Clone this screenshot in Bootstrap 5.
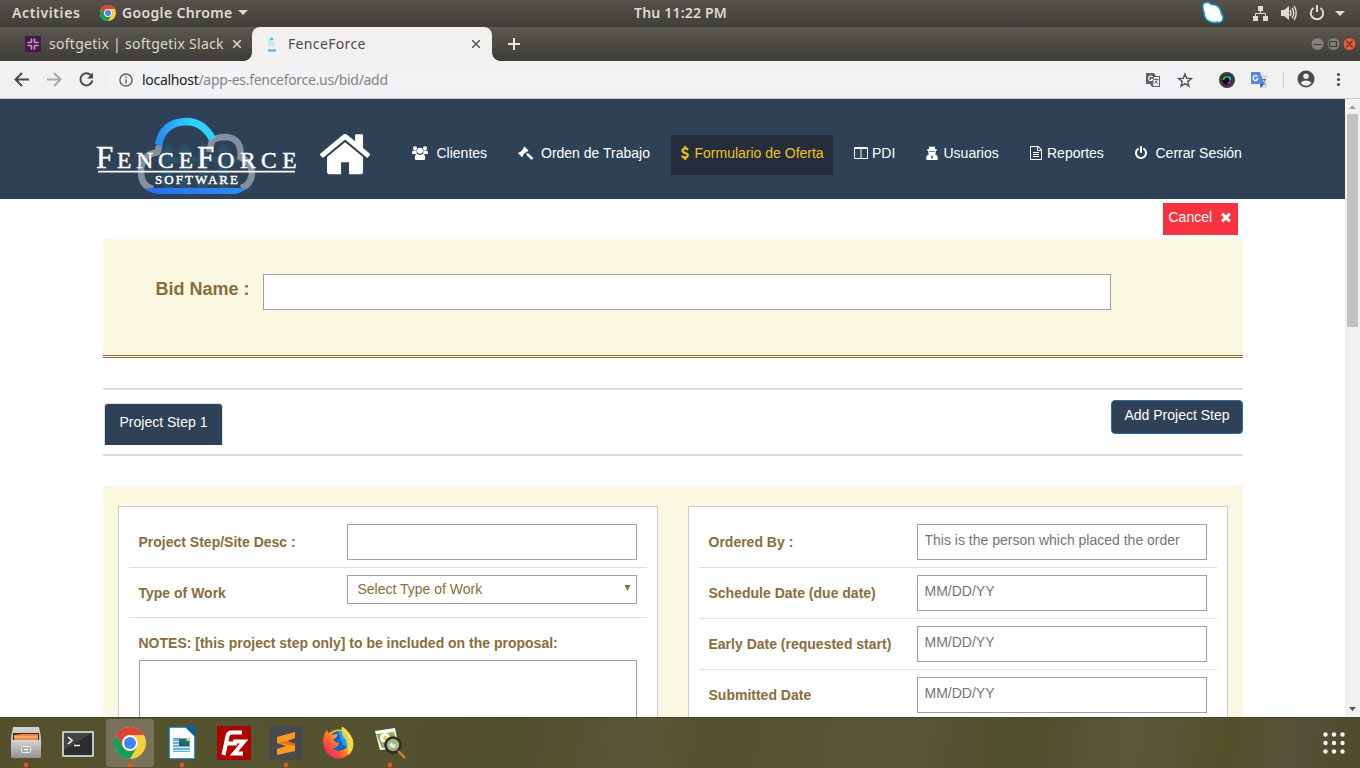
<!DOCTYPE html>
<html lang="es">
<head>
<meta charset="utf-8">
<title>FenceForce</title>
<link href="https://cdn.jsdelivr.net/npm/bootstrap@5.3.0/dist/css/bootstrap.min.css" rel="stylesheet">
<style>
body{width:1360px;height:768px;overflow:hidden;font:14px/20px "Liberation Sans",Arial,sans-serif;color:#333;background:#fff}
svg{display:block;flex:none}
.ui{font-family:"Noto Sans","Open Sans",sans-serif;white-space:nowrap}
.sysbar{height:27px;background:linear-gradient(#56524a,#413f3a);color:#dfdbd2;font-weight:600;font-size:14px;padding:0 0 1px 12px}
.sysbar .clock{margin-left:386px;width:94px}
.tabbar{height:34px;background:linear-gradient(#5a594f,#3e3c38);color:#dcd9d0;font-size:14px}
.tab-idle{width:252px;padding-left:25px}
.tab-live{width:240px;background:#f2f1f0;border-radius:8px 8px 0 0;color:#4a4a4c;padding-left:14px;position:relative}
.tab-live:before,.tab-live:after{content:"";position:absolute;bottom:0;width:8px;height:8px}
.tab-live:before{left:-8px;background:radial-gradient(circle at 0 0,transparent 7.5px,#f2f1f0 8px)}
.tab-live:after{right:-8px;background:radial-gradient(circle at 100% 0,transparent 7.5px,#f2f1f0 8px)}
.urlbar{height:38px;background:#f2f1f0;border-bottom:1px solid #c9c8c7;padding-left:12px}
.omni{width:1094px;height:28px;border-radius:14px;background:#f1f3f4;margin-left:12px;padding-left:11px;font-size:14px;color:#80868b}
.omni b{font-weight:400;color:#202124}
.view{height:618px;overflow:hidden}
.site{width:1345px}
.site-head{height:100px;background:#2f4156}
.logo{margin:11px 0 0 95px}
.home{margin:33px 0 0 22px}
.menu{display:grid;grid-template-columns:106px 153px 183px 72px 104px 104px 120px;margin:36px 0 0 42px;height:40px;color:#fff}
.menu>div{display:flex;height:36px;align-items:center;white-space:nowrap}
.menu svg{fill:#fff}
.menu .current{background:#232d3b;color:#f4c020;height:40px;width:162px;padding:0 0 4px 10px}
.menu .current svg{fill:#f4c020}
.wrap{width:1140px;margin-left:103px}
.cancel{width:75px;height:32px;background:#f7333f;color:#fff;margin:4px 5px 4px auto;padding:4px 0 0 5.5px}
.cream{background:#fbf8e1}
.bid{height:119px;border-bottom:3px double #8a6d3b;padding:35px 0 0 52.5px;color:#8a6d3b}
.bid label{font-size:18px;font-weight:700;width:107.5px;line-height:30px}
.box{border:1px solid #a0a0a0;background:#fff;height:36px;border-radius:0;display:block;font-size:14px;line-height:20px;padding:0 6.5px 4px;outline:0}
.box::placeholder{color:#757575;opacity:1}
.steps{margin-top:30px;height:68px;border:solid #ddd;border-width:2px 0}
.step-tab{width:119px;height:42px;margin:13px 0 0 1px;background:#2f4156;border:1px solid #ddd;border-bottom:0;border-radius:4px 4px 0 0;color:#fff;padding:8px 14.5px}
.step-add{width:132px;height:34px;margin-top:10px;background:#2f4156;border:1px solid #2e6da4;border-radius:4px;color:#fff;text-align:center;padding-top:4px}
.panels{margin-top:30px;padding:20px 15px;gap:30px;height:260px}
.panel-box{width:540px;height:300px;background:#fff;border:1px solid #ccc;padding:10px;color:#8a6d3b}
.line{height:51px;border-bottom:1px solid #ddd;padding:7px 10px 7px 9.5px}
.line label{width:208.5px;font-weight:700;line-height:36px}
.line .box{width:290px}
.notes{padding:15px 10px 0}
.notes .caption-row{height:27px;margin-left:-.5px}
.notes .box{height:100px;resize:none}
.pick{border:1px solid #a0a0a0;width:290px;height:29px;padding:0 5px 2px 9.5px}
.scroller{width:15px;background:#f1f1f1}
.scroller i{width:11px;height:213px;background:#c1c1c1;margin-top:3px}
.dock{height:51px;background:linear-gradient(100deg,#53502b,#565330 20%,#504f2c 38%,#5c5636 47%,#54522d 52%,#5a5537 66%,#4f4f2a 75%,#5d563b 83%,#545029 90%,#5a5139 94%,#4c4b2b);border-top:1px solid #47462b}
</style>
</head>
<body class="d-flex flex-column">

<div class="sysbar ui d-flex align-items-center">
  <span style="letter-spacing:.6px;width:88px">Activities</span>
  <svg width="16" height="16" viewBox="0 0 48 48"><use href="#chrome"/></svg>
  <span style="letter-spacing:.35px;width:116px;margin-left:6px">Google Chrome</span>
  <svg width="10" height="6"><path d="M0 0h10L5 5z" fill="#dfdbd2"/></svg>
  <span class="clock" style="letter-spacing:.2px">Thu 11:22 PM</span>
  <svg style="margin-left:472px" width="156" height="26" viewBox="1200 0 156 26">
    <path d="M1203 7.500q-1-5 4-5 3 0 4 2 9-.5 10.500 9.500 2.500 3 1 6-1.500 3.500-5.500 2-2 1-6 0-7-2-7-10-1-2-1-4.500z" fill="#fff" stroke="#119fda" stroke-width="1.400"/>
    <g fill="#dfdbd2"><path d="M1258 6h5v5h-5zM1253 16h5v5h-5zM1263 16h5v5h-5zM1281 10h3l5-4v14l-5-4h-3z"/><path d="M1335 11h10l-5 5z"/></g>
    <g fill="none" stroke="#dfdbd2" stroke-width="1"><path d="M1260.500 11v3M1255.500 16v-2.500h10V16"/><path stroke-width="1.400" d="M1290 10q2 3 0 6M1292 8q3.500 5 0 10M1294 6q4.500 7 0 14"/><path stroke-width="2" d="M1313.500 8a6.200 6.200 0 1 0 7 0M1317 5v7"/></g>
  </svg>
</div>

<div class="tabbar d-flex ui">
  <div class="tab-idle d-flex align-items-center">
    <svg width="16" height="16"><path fill="#4a154b" d="M0 0h16v16H0z"/><path d="M6.500 3v3.500H4M9.500 13V9.500H12M3 9.500h3.500V12M13 6.500H9.500V4M3 6.500h1M9.500 3v1M13 9.500h-1M6.500 13v-1" fill="none" stroke="#b59fb5" stroke-width="1.700" stroke-linecap="round" stroke-dasharray="2.800 1"/></svg>
    <span style="width:184px;margin-left:8px;letter-spacing:.28px">softgetix | softgetix Slack</span>
    <svg width="8" height="8"><path d="M0 0l8 8M8 0L0 8" stroke="#dcd9d0" stroke-width="1.500"/></svg>
  </div>
  <div class="tab-live d-flex align-items-center">
    <svg width="12" height="16"><path d="M2 5q1-4 4-4l2 3 1 7H2z" fill="#c9e9f4"/><path d="M3 4l3-3 2 3" fill="#44c6f4"/><path d="M2 13h8v3H2z" fill="#89b9ee"/></svg>
    <span style="width:184px;margin-left:10px;letter-spacing:.35px">FenceForce</span>
    <svg width="8" height="8"><path d="M0 0l8 8M8 0L0 8" stroke="#55575a" stroke-width="1.500"/></svg>
  </div>
  <svg width="868" height="34" viewBox="492 27 868 34">
    <path d="M508 44h12M514 38v12" stroke="#e8e5dc" stroke-width="2"/>
    <g stroke="#3b3a36" stroke-width=".7"><circle cx="1317.500" cy="44" r="6.500" fill="#82807a"/><circle cx="1333.500" cy="44" r="6.500" fill="#82807a"/><circle cx="1349.500" cy="44" r="6.500" fill="#ee5a31"/></g>
    <path d="M1313.500 44.500h8M1329.500 41.500h7v5h-7zM1346.500 41l6 6M1352.500 41l-6 6" fill="none" stroke="#3b3a36" stroke-width="1.200"/>
  </svg>
</div>

<div class="urlbar ui d-flex align-items-center">
  <svg width="84" height="20" viewBox="12 70 84 20" fill="none" stroke-width="2"><path d="M29 79.500H16M22 73l-6.500 6.500L22 86" stroke="#4b4b4b"/><path d="M47 79.500h13M54 73l6.500 6.500L54 86" stroke="#a9a9a8"/><path d="M91 75.500a6 6 0 1 0 1.300 5" stroke="#4b4b4b"/><path d="M93 72.500v6h-6z" fill="#4b4b4b"/></svg>
  <div class="omni d-flex align-items-center">
    <svg width="14" height="14" fill="none" stroke="#5f6368" stroke-width="1.500"><circle cx="7" cy="7" r="6.100"/><path d="M7 6.200V10.500M7 3.500v1.500"/></svg>
    <span style="margin-left:9px;letter-spacing:-.3px"><b>localhost</b>/app-es.fenceforce.us/bid/add</span>
  </div>
  <svg style="margin-left:-62px" width="210" height="28" viewBox="1140 66 210 28">
    <path d="M1146 73h8l2 3h4v11h-8l-2-3h-4z" fill="#5f6368"/><path d="M1154 77h5v9h-6" fill="#f1f3f4"/><path d="M1153.500 79.500h5M1156 78v1.500M1157.500 79.500q-1 3-3 4M1155 81l3 3" stroke="#5f6368" fill="none" stroke-width=".9"/><path d="M1152.500 77a2.200 2.200 0 1 0 .3 2.200h-2" fill="none" stroke="#fff" stroke-width="1.100"/>
    <path d="M1185 74l1.700 4.300 4.600.3-3.500 3 1.100 4.500-3.900-2.500-3.900 2.500 1.100-4.500-3.500-3 4.600-.3z" fill="none" stroke="#55585c" stroke-width="1.500"/>
    <circle cx="1227" cy="80" r="8" fill="#3b3b40"/><circle cx="1227" cy="80" r="4.700" fill="#08080c"/><path d="M1223.500 80a3.500 3.500 0 0 1 4-3.400" fill="none" stroke="#20e040" stroke-width="1.600"/><path d="M1227.500 76.600a3.500 3.500 0 0 1 3 3.400" fill="none" stroke="#1dc6df" stroke-width="1.600"/><path d="M1230.500 80a3.500 3.500 0 0 1-3 3.500" fill="none" stroke="#b523c0" stroke-width="1.600"/>
    <path d="M1258 75h9v13h-6z" fill="#dcdcdc"/><path d="M1251 72h9l4 12h-13z" fill="#5486ee"/><path d="M1260 84h4l-3.500 4z" fill="#3b4fc8"/><path d="M1257.500 76.500a2.500 2.500 0 1 0 .4 2.500h-2.400" fill="none" stroke="#fff" stroke-width="1.200"/><path d="M1261 79.500h5M1265 79.500q-1 4-3 4M1262.500 81.500l3.500 3.500" fill="none" stroke="#687787"/>
    <path d="M1283.500 72v16" stroke="#cfcecd"/>
    <circle cx="1306" cy="79" r="8.500" fill="#4b4b4d"/><circle cx="1306" cy="76.300" r="2.700" fill="#f2f1f0"/><path d="M1300.600 82.500q5.400-4 10.800 0-2 3.200-5.400 3.200t-5.400-3.200z" fill="#f2f1f0"/>
    <g fill="#4b4b4d"><circle cx="1338.500" cy="74.500" r="1.600"/><circle cx="1338.500" cy="79.500" r="1.600"/><circle cx="1338.500" cy="84.500" r="1.600"/></g>
  </svg>
</div>

<div class="view d-flex">
  <div class="site">
    <div class="site-head d-flex">
      <svg class="logo" width="203" height="88" viewBox="95 110 203 88">
        <defs><linearGradient id="sky"><stop stop-color="#278df5"/><stop offset=".6" stop-color="#2fd0ff"/></linearGradient><linearGradient id="base"><stop stop-color="#2a6cf0"/><stop offset="1" stop-color="#2e8cf5"/></linearGradient></defs>
        <g fill="#2c4f68"><path d="M162 189v-41l5-6 5 6v41zM180 189v-41l5-6 5 6v41zM198 189v-41l5-6 5 6v41zM218 189v-41l5-6 5 6v41z"/><path d="M162 157h80v5h-80z"/></g>
        <g fill="none" stroke="#8390a0" stroke-width="6.500"><path d="M158.500 145q1 4-1.500 7.500-16 2-16 19.500 0 14 12 17"/><path d="M209 152l3-11q4-4 14-4 16 1 14.500 20 11 5 11.500 16-1 12-11 15"/><path d="M162 189.300h12M178 189.300h13M196 189.300h14" stroke-width="1.500"/></g>
        <path d="M158.500 145q4-22.500 27.500-23.500 17 0 26.500 17.500" fill="none" stroke="url(#sky)" stroke-width="7.500"/>
        <path d="M145 188h101q-5 6-13 6H160q-9 0-15-6z" fill="url(#base)"/>
        <g fill="#fff" stroke="#fff" stroke-width=".45" font-family="Liberation Serif,serif"><text x="96" y="168.300" font-size="31">F</text><text x="117" y="168.300" font-size="23.500" textLength="76">ENCE</text><text x="197" y="168.300" font-size="31">F</text><text x="217.500" y="168.300" font-size="23.500" textLength="79">ORCE</text><path stroke="none" d="M98 170.700h197v1.800H98z"/><text x="155" y="184.300" font-size="13" textLength="83">SOFTWARE</text></g>
      </svg>
      <svg class="home" width="50" height="44" viewBox="30 190 1600 1400" fill="#fff"><path d="M1408 992v480q0 26-19 45t-45 19h-384v-384h-256v384h-384q-26 0-45-19t-19-45v-480q0-1 .5-3t.5-3l575-474 575 474q1 2 1 6zm223-69l-62 74q-8 9-21 11h-3q-13 0-21-7l-692-577-692 577q-12 8-24 7-13-2-21-11l-62-74q-8-10-7-23.500t11-21.500l719-599q32-26 76-26t76 26l244 204v-195q0-14 9-23t23-9h192q14 0 23 9t9 23v408l219 182q10 8 11 21.500t-7 23.500z"/></svg>
      <div class="menu">
        <div><svg width="16" height="14" viewBox="0 0 16 14"><circle cx="3" cy="2.200" r="2"/><circle cx="13" cy="2.200" r="2"/><path d="M0 7.500Q0 4.500 1.500 4.500H5Q4 6 5 8H1.200Q0 8 0 7.500zM16 7.500Q16 4.500 14.500 4.500H11Q12 6 11 8h3.800Q16 8 16 7.500z"/><circle cx="8" cy="4.800" r="3"/><path d="M2.800 12.500Q2.500 8 5.300 8q2.700 2 5.400 0 2.800 0 2.500 4.500 0 1.500-1.700 1.500h-7q-1.700 0-1.700-1.500z"/></svg><span style="margin-left:8.500px">Clientes</span></div>
        <div><svg width="15" height="14" viewBox="0 0 15 14"><path d="M0 7l.8-.8 1 .3 3.700-3.700-.3-1L6.500.5l4 4-1.200 1.200-1-.3-.8.8 1.500 1.500.8-.8 5 4.500q.6 1-.3 1.800t-1.700 0L8.300 8.700 9 8 7.300 6.800 4.800 9l.3 1-1.200 1.200z"/></svg><span style="margin-left:8px">Orden de Trabajo</span></div>
        <div class="current"><svg width="8" height="14" viewBox="384 0 1000 1792"><path d="M1362 1185q0 153-99.500 263.500t-258.500 136.500v175q0 14-9 23t-23 9h-135q-13 0-22.500-9.500t-9.500-22.500v-175q-66-9-127.500-31t-101.500-44.500-74-48-46.500-37.500-17.500-18q-17-21-2-41l103-135q7-10 23-12 15-2 24 9l2 2q113 99 243 125 37 8 74 8 81 0 142.500-43t61.500-122q0-28-15-53t-33.500-42-58.500-37.500-66-32-80-32.500q-39-16-61.500-25t-61.500-26.500-62.500-31-56.500-35.500-53.500-42.500-43.500-49-35.500-58-21-66.500-8.500-78q0-138 98-242t255-134v-180q0-13 9.500-22.500t22.500-9.500h135q14 0 23 9t9 23v176q57 6 110.500 23t87 33.500 63.500 37.500 39 29 15 14q17 18 5 38l-81 146q-8 15-23 16-14 3-27-7-3-3-14.500-12t-39-26.500-58.500-32-74.500-26-85.500-11.500q-95 0-155 43t-60 111q0 26 8.500 48t29.500 41.500 39.500 33 56 31 60.500 27 70 27.500q53 20 81 31.500t76 35 75.500 42.500 62 50 53 63.500 31.500 76.500 13 94z" stroke="#f4c020" stroke-width="60"/></svg><span style="margin-left:5.500px">Formulario de Oferta</span></div>
        <div><svg width="14" height="14" viewBox="0 0 14 14"><path fill-rule="evenodd" d="M1 1h12q1 0 1 1v10q0 1-1 1H1q-1 0-1-1V2q0-1 1-1zm0 2v9h5.500V3zm6.500 0v9H13V3z"/></svg><span style="margin-left:4px">PDI</span></div>
        <div><svg width="12" height="14" viewBox="0 0 12 14"><path d="M3.500.3q2.500 1 5 0l.7 2.700 2.300.8q-.5.900-1.800 1.200.6 1.800-.7 3.300 2.900 1 2.900 4.200 0 1.500-1.500 1.500H1.600Q.1 14 .1 12.500.1 9.300 3 8.300 1.700 6.800 2.300 5 1 4.700.5 3.800L2.800 3z"/><path d="M3.200 5.600h5.600M5.300 9.500l.3 3M6.700 9.500l-.3 3" stroke="#2f4156" stroke-width=".7"/></svg><span style="margin-left:5.500px">Usuarios</span></div>
        <div><svg width="12" height="14" viewBox="0 0 12 14"><path fill-rule="evenodd" d="M.8 0h7.700L12 3.500v9.700q0 .8-.8.800H.8Q0 14 0 13.200V.8Q0 0 .8 0zM1 1v12h10V5H7V1zm7 0v3h3z"/><path d="M3 6h6v1H3zM3 8h6v1H3zM3 10h6v1H3z"/></svg><span style="margin-left:5px">Reportes</span></div>
        <div><svg width="14" height="14" viewBox="0 0 1792 1792"><path d="M1664 896q0 156-61 298t-164 245-245 164-298 61-298-61-245-164-164-245-61-298q0-182 80.500-343t226.500-270q43-32 95.500-25t83.500 50q32 42 24.500 94.500t-49.500 84.500q-98 74-151.500 181t-53.500 228q0 104 40.500 198.500t109.500 163.500 163.500 109.500 198.500 40.500 198.500-40.500 163.500-109.500 109.500-163.500 40.500-198.500q0-121-53.500-228t-151.500-181q-42-32-49.500-84.500t24.500-94.500q31-43 84-50t95 25q146 109 226.500 270t80.500 343zm-640-768v640q0 52-38 90t-90 38-90-38-38-90v-640q0-52 38-90t90-38 90 38 38 90z"/></svg><span style="margin-left:7.500px">Cerrar Sesión</span></div>
      </div>
    </div>

    <div class="wrap">
      <div class="cancel d-flex">Cancel<svg style="margin:3px 0 0 7px" width="14" height="14" viewBox="0 0 1792 1792" fill="#fff"><path d="M1490 1322q0 40-28 68l-136 136q-28 28-68 28t-68-28l-294-294-294 294q-28 28-68 28t-68-28l-136-136q-28-28-28-68t28-68l294-294-294-294q-28-28-28-68t28-68l136-136q28-28 68-28t68 28l294 294 294-294q28-28 68-28t68 28l136 136q28 28 28 68t-28 68l-294 294 294 294q28 28 28 68z"/></svg></div>
      <div class="bid cream d-flex">
        <label for="bid">Bid Name :</label>
        <input id="bid" class="box" style="width:848px">
      </div>
      <div class="steps d-flex justify-content-between">
        <div class="step-tab text-nowrap">Project Step 1</div>
        <div class="step-add text-nowrap">Add Project Step</div>
      </div>
      <div class="panels cream d-flex">
        <div class="panel-box">
          <div class="line d-flex"><label>Project Step/Site Desc :</label><input class="box"></div>
          <div class="line d-flex" style="height:50px"><label>Type of Work</label><div class="pick d-flex align-items-center justify-content-between">Select Type of Work<svg width="7" height="7"><path d="M.5 0h6L3.500 6z" fill="#8a6d3b"/></svg></div></div>
          <div class="notes"><div class="caption-row fw-bold">NOTES: [this project step only] to be included on the proposal:</div><textarea class="box w-100"></textarea></div>
        </div>
        <div class="panel-box">
          <div class="line d-flex"><label>Ordered By :</label><input class="box" placeholder="This is the person which placed the order"></div>
          <div class="line d-flex"><label>Schedule Date (due date)</label><input class="box" placeholder="MM/DD/YY"></div>
          <div class="line d-flex"><label>Early Date (requested start)</label><input class="box" placeholder="MM/DD/YY"></div>
          <div class="line d-flex"><label>Submitted Date</label><input class="box" placeholder="MM/DD/YY"></div>
        </div>
      </div>
    </div>
  </div>
  <div class="scroller d-flex flex-column align-items-center">
    <svg width="15" height="12"><path d="M4 10l3.500-4 3.500 4z" fill="#a3a3a3"/></svg>
    <i></i>
    <svg class="mt-auto" width="15" height="12"><path d="M4 2l3.500 4L11 2z" fill="#505050"/></svg>
  </div>
</div>

<div class="dock">
  <svg width="1360" height="50" viewBox="0 718 1360 50">
    <defs>
      <linearGradient id="steel" x2="0" y2="1"><stop stop-color="#d5d5d5"/><stop offset="1" stop-color="#929292"/></linearGradient>
      <linearGradient id="fire" x1="1" x2="0" y2="1"><stop stop-color="#fff04a"/><stop offset=".45" stop-color="#ff9a1f"/><stop offset=".7" stop-color="#ff4a3c"/><stop offset="1" stop-color="#d41c87"/></linearGradient>
      <g id="chrome"><circle cx="24" cy="24" r="24" fill="#fbcd43"/><path d="M3.200 12A24 24 0 0 1 44.800 12H24a12 12 0 0 0-10.400 18z" fill="#dc4437"/><path d="M3.200 12A24 24 0 0 0 24 48L34.400 30a12 12 0 0 1-20.800 0z" fill="#14a05a"/><circle cx="24" cy="24" r="11.500" fill="#fff"/><circle cx="24" cy="24" r="9" fill="#4286f5"/></g>
    </defs>
    <path d="M13 727h26l2 10v19q0 2-2 2H13q-2 0-2-2v-19z" fill="url(#steel)"/><path d="M13 733h26v7H13z" fill="#3a2a21"/><path d="M14 735l8-1h16v6H14z" fill="#ee8740"/><path d="M14 737h24" stroke="#fbd2a0"/><path d="M11 740h30v16q0 2-2 2H13q-2 0-2-2z" fill="url(#steel)"/><rect x="21.500" y="746.500" width="9" height="6" rx="1" fill="#aaa" stroke="#eee"/><path d="M24 749.500h4" stroke="#fff" stroke-width="1.500"/>
    <rect x="62" y="731" width="32" height="26" rx="1" fill="#c6c6c6"/><path d="M64 733h28v22H64z" fill="#2b2d2e"/><path d="M64 733h28L64 750z" fill="#444"/><path d="M68 737l4 3.500-4 3.500M74 745.500h6" fill="none" stroke="#fff" stroke-width="1.600"/>
    <rect x="106" y="719" width="48" height="48" rx="3" fill="#76735a"/><svg x="114" y="727" width="32" height="32" viewBox="0 0 48 48"><use href="#chrome"/></svg>
    <path d="M169 727h17l9 9v23h-26z" fill="#fff" stroke="#16659c" stroke-width="1.500"/><path d="M186 726h10v10z" fill="#0d5f99"/><path d="M173 738h17v14h-17z" fill="#67b2d8"/><path d="M173 741.500h7M173 744.500h7M173 747.500h17M173 750.500h17" stroke="#d9eff8"/><path d="M179 739h10v7h-10z" fill="#236a91"/><path d="M179 746l4-4 3 2 3-2v4z" fill="#375f3b"/><circle cx="188" cy="739.500" r="1.500" fill="#ffe14a"/>
    <rect x="217.500" y="726.500" width="33" height="33" fill="#b30000" stroke="#8c0000" stroke-dasharray="2 1.500"/><path d="M223.500 755l4-19q.8-3.500 4-3.500H242M226 743.500h11M233 741.500h11l-10 12h9" fill="none" stroke="#fff" stroke-width="4"/>
    <rect x="269" y="726" width="34" height="34" rx="3" fill="#4a4a4a"/><path d="M277 737l18-5v6l-8 3 8 3v7l-18 4v-6l9-3-9-3z" fill="#ff9823"/><path d="M277 743l10-2 8 3v2z" fill="#dc7416"/>
    <circle cx="338.500" cy="744" r="14.500" fill="url(#fire)"/><circle cx="339" cy="741" r="10" fill="#1764c9"/><path d="M338 731q8-1 11 7v10l-6-3z" fill="#19a2ee"/><path d="M323 743q0-9 4-13 1 4 5 5l6-1q-2 5-5 5 2 4 6 4-2 6-7 5 5 6 12 3 7-4 5-10-2-7-7-11-1-4 1-3 7 5 10 14 1 14-13 17-14 0-17-16z" fill="url(#fire)"/><path d="M342 727q8 5 11 13 2 11-5 15 0-7-2-15-6-6-4-13z" fill="#ffe24a" fill-opacity=".8"/>
    <path d="M375 731l20-3 4 20-19 2z" fill="#fff"/><path d="M376 734l18-2 4 14-16 2z" fill="#8db14a"/><circle cx="385" cy="738" r="5" fill="#fff"/><circle cx="385" cy="738" r="2" fill="#f3c833"/><circle cx="393" cy="745" r="7.500" fill="#a5ba7c" fill-opacity=".85" stroke="#2c2c2c" stroke-width="2.600"/><path d="M389 745l3-3 1 3 3-1-2 4z" fill="#fff"/><path d="M398 751l7 7" stroke="#c88343" stroke-width="2.400"/>
    <g fill="#e95420"><circle cx="26" cy="765" r="2.300"/><circle cx="130" cy="765" r="2.300"/><circle cx="182" cy="765" r="2.300"/><circle cx="286" cy="765" r="2.300"/><circle cx="390" cy="765" r="2.300"/></g>
    <g fill="#f4f4f2"><circle cx="1325.500" cy="734.500" r="2.200"/><circle cx="1334" cy="734.500" r="2.200"/><circle cx="1342.500" cy="734.500" r="2.200"/><circle cx="1325.500" cy="743" r="2.200"/><circle cx="1334" cy="743" r="2.200"/><circle cx="1342.500" cy="743" r="2.200"/><circle cx="1325.500" cy="751.500" r="2.200"/><circle cx="1334" cy="751.500" r="2.200"/><circle cx="1342.500" cy="751.500" r="2.200"/></g>
  </svg>
</div>
<script src="https://cdn.jsdelivr.net/npm/bootstrap@5.3.0/dist/js/bootstrap.bundle.min.js"></script>
</body>
</html>
